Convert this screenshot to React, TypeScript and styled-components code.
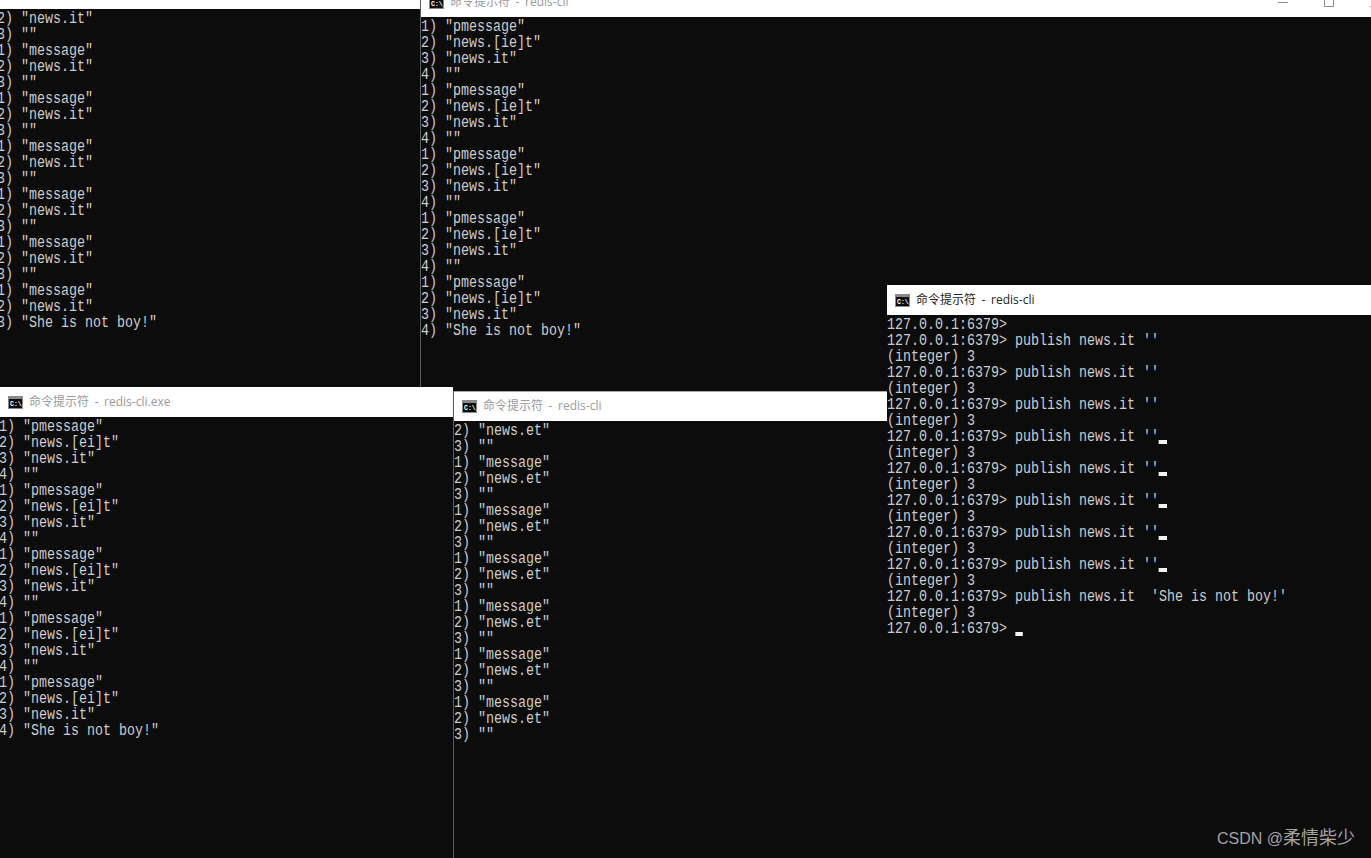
import React from "react";
import styled, { createGlobalStyle } from "styled-components";

const GlobalStyle = createGlobalStyle`
    html, body {
        margin: 0;
        padding: 0;
        background: #0c0c0c;
    }
`;

const Desktop = styled.div`
    position: relative;
    width: 1371px;
    height: 858px;
    overflow: hidden;
    background: #0c0c0c;
`;

interface WindowProps {
    $left: number;
    $top: number;
    $width: number;
    $height: number;
    $outlined?: boolean;
}

const Window = styled.section<WindowProps>`
    position: absolute;
    left: ${({ $left }) => $left}px;
    top: ${({ $top }) => $top}px;
    width: ${({ $width }) => $width}px;
    height: ${({ $height }) => $height}px;
    box-sizing: border-box;
    display: flex;
    flex-direction: column;
    overflow: hidden;
    background: #0c0c0c;
    border-left: ${({ $outlined }) => ($outlined ? "1px solid #5c5c5c" : "none")};
`;

const TitleBar = styled.header<{ $outlined?: boolean }>`
    flex: none;
    height: 30px;
    box-sizing: border-box;
    display: flex;
    align-items: center;
    padding-left: 8px;
    background: #ffffff;
    border-top: ${({ $outlined }) => ($outlined ? "1px solid #a8a8a8" : "none")};
`;

const TitleText = styled.span<{ $active?: boolean }>`
    margin-left: 6px;
    margin-bottom: ${({ $active }) => ($active ? "0" : "1px")};
    font-family: "Open Sans", "Noto Sans CJK SC", sans-serif;
    font-size: 12px;
    line-height: 16px;
    word-spacing: 2.5px;
    white-space: nowrap;
    color: ${({ $active }) => ($active ? "#222222" : "#9a9a9a")};
`;

const Controls = styled.div`
    margin-left: auto;
    display: flex;
    height: 100%;
`;

const ControlButton = styled.div`
    width: 46px;
    display: flex;
    align-items: center;
    justify-content: center;
    color: #8c8c8c;
`;

// the console face is a tall half-width one, so squeeze a 16px mono down to 8px cells
const Console = styled.div<{ $shift?: number }>`
    margin-left: ${({ $shift }) => $shift ?? 0}px;
    padding-top: 2px;
    font-family: "Liberation Mono", "DejaVu Sans Mono", monospace;
    font-size: 16px;
    line-height: 16px;
    color: #cccccc;
    transform: scaleX(0.8333);
    transform-origin: left top;
`;

const Row = styled.div`
    height: 16px;
    white-space: pre;
`;

const Caret = styled.span`
    display: inline-block;
    width: 9.6px;
    height: 4px;
    vertical-align: -3px;
    background: #f2f2f2;
`;

const Watermark = styled.div`
    position: absolute;
    right: 16px;
    bottom: 9px;
    font-family: "Liberation Sans", "Noto Sans CJK SC", sans-serif;
    font-size: 16px;
    line-height: 20px;
    color: #a3a3a3;
`;

const WatermarkName = styled.span`
    font-size: 18px;
`;

const ConsoleIcon = () => (
    <svg width="15" height="13" viewBox="0 0 15 13">
        <rect x="0" y="0" width="15" height="13" fill="#8a8a8a" />
        <rect x="1" y="3" width="13" height="9" fill="#0c0c0c" />
        <text x="2" y="10" fontFamily="Liberation Mono" fontSize="6.5" fontWeight="700" fill="#ffffff">
            C:\_
        </text>
    </svg>
);

const MinimizeIcon = () => (
    <svg width="10" height="10" viewBox="0 0 10 10">
        <path d="M0 5.5h10" stroke="currentColor" fill="none" />
    </svg>
);

const MaximizeIcon = () => (
    <svg width="10" height="10" viewBox="0 0 10 10">
        <path d="M.5.5h9v9h-9z" stroke="currentColor" fill="none" />
    </svg>
);

const CloseIcon = () => (
    <svg width="10" height="10" viewBox="0 0 10 10">
        <path d="M0 0l10 10M10 0L0 10" stroke="currentColor" fill="none" />
    </svg>
);

const SHE = `"She is not boy!"`;

// subscriber output: one reply per publish, the last one carries the text
const subscribeRows = (channel: string) => {
    const rows = [`2) "${channel}"`, `3) ""`];
    for (let i = 0; i < 6; i++) {
        rows.push(`1) "message"`, `2) "${channel}"`, `3) ""`);
    }
    return rows;
};

const patternRows = (pattern: string) => {
    const rows: string[] = [];
    for (let i = 0; i < 5; i++) {
        rows.push(`1) "pmessage"`, `2) "news.${pattern}t"`, `3) "news.it"`, `4) ""`);
    }
    return rows;
};

const withLast = (rows: string[], text: string) => [...rows.slice(0, -1), text];

const PROMPT = "127.0.0.1:6379> ";
const REPLY = "(integer) 3";
const PUBLISH = "publish news.it ''";

const Lines = ({ rows }: { rows: string[] }) => (
    <>
        {rows.map((row, index) => (
            <Row key={index}>{row}</Row>
        ))}
    </>
);

const App: React.FC = () => {
    return (
        <Desktop>
            <GlobalStyle />

            <Window $left={0} $top={-21} $width={421} $height={408}>
                <TitleBar />
                <Console $shift={-3}>
                    <Lines rows={withLast(subscribeRows("news.it"), `3) ${SHE}`)} />
                </Console>
            </Window>

            <Window $left={420} $top={-13} $width={978} $height={400} $outlined>
                <TitleBar>
                    <ConsoleIcon />
                    <TitleText>命令提示符 - redis-cli</TitleText>
                    <Controls>
                        <ControlButton>
                            <MinimizeIcon />
                        </ControlButton>
                        <ControlButton>
                            <MaximizeIcon />
                        </ControlButton>
                        <ControlButton>
                            <CloseIcon />
                        </ControlButton>
                    </Controls>
                </TitleBar>
                <Console>
                    <Lines rows={withLast(patternRows("[ie]"), `4) ${SHE}`)} />
                </Console>
            </Window>

            <Window $left={0} $top={387} $width={453} $height={471}>
                <TitleBar>
                    <ConsoleIcon />
                    <TitleText>命令提示符 - redis-cli.exe</TitleText>
                </TitleBar>
                <Console $shift={-1}>
                    <Lines rows={withLast(patternRows("[ei]"), `4) ${SHE}`)} />
                </Console>
            </Window>

            <Window $left={453} $top={391} $width={434} $height={467} $outlined>
                <TitleBar $outlined>
                    <ConsoleIcon />
                    <TitleText>命令提示符 - redis-cli</TitleText>
                </TitleBar>
                <Console>
                    <Lines rows={subscribeRows("news.et")} />
                </Console>
            </Window>

            <Window $left={887} $top={285} $width={484} $height={511}>
                <TitleBar>
                    <ConsoleIcon />
                    <TitleText $active>命令提示符 - redis-cli</TitleText>
                </TitleBar>
                <Console>
                    <Row>{PROMPT}</Row>
                    {[0, 1, 2, 3, 4, 5, 6, 7].map((i) => (
                        <React.Fragment key={i}>
                            <Row>
                                {PROMPT}
                                {PUBLISH}
                                {i > 2 && <Caret />}
                            </Row>
                            <Row>{REPLY}</Row>
                        </React.Fragment>
                    ))}
                    <Row>{PROMPT}publish news.it  'She is not boy!'</Row>
                    <Row>{REPLY}</Row>
                    <Row>
                        {PROMPT}
                        <Caret />
                    </Row>
                </Console>
            </Window>

            <Watermark>
                CSDN @<WatermarkName>柔情柴少</WatermarkName>
            </Watermark>
        </Desktop>
    );
};

export default App;
